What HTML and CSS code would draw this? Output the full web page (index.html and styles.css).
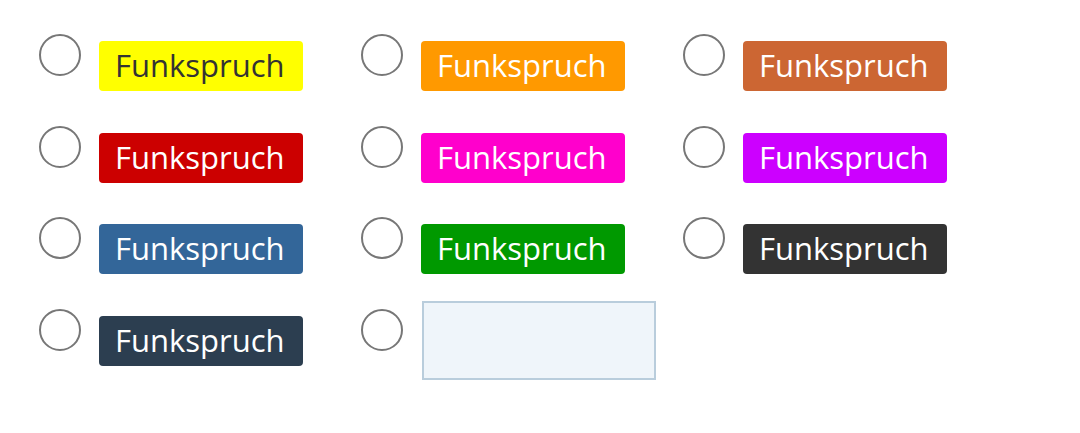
FILE: index.html
```html
<!DOCTYPE html>
<html lang="de">
<head>
	<meta charset="UTF-8">
	<title>Funkspruch</title>
	<link rel="stylesheet" href="styles.css">
</head>
<body>

	<div class="choices">
		<label class="choice"><span class="radio"></span><span class="tag yellow">Funkspruch</span></label>
		<label class="choice"><span class="radio"></span><span class="tag orange">Funkspruch</span></label>
		<label class="choice"><span class="radio"></span><span class="tag brown">Funkspruch</span></label>

		<label class="choice"><span class="radio"></span><span class="tag red">Funkspruch</span></label>
		<label class="choice"><span class="radio"></span><span class="tag pink">Funkspruch</span></label>
		<label class="choice"><span class="radio"></span><span class="tag purple">Funkspruch</span></label>

		<label class="choice"><span class="radio"></span><span class="tag blue">Funkspruch</span></label>
		<label class="choice"><span class="radio"></span><span class="tag green">Funkspruch</span></label>
		<label class="choice"><span class="radio"></span><span class="tag dark">Funkspruch</span></label>

		<label class="choice"><span class="radio"></span><span class="tag navy">Funkspruch</span></label>
		<label class="choice"><span class="radio"></span><input class="custom" type="text"></label>
	</div>

</body>
</html>
```

FILE: styles.css
```css
body{
	background-color: #fff;
	font-family: "Open Sans", sans-serif;
	margin: 0;
	padding: 0;
}

.choices{
	display: grid;
	grid-template-columns: repeat(3, 322px);
	grid-auto-rows: 91.7px;
	padding: 34px 0 0 39px;
}

.choice{
	display: flex;
	align-items: flex-start;
	gap: 18px;
}

.radio{
	display: inline-block;
	width: 38px;
	height: 38px;
	border: 2px solid #777;
	border-radius: 50%;
	box-sizing: content-box;
	flex: none;
}

.tag{
	display: inline-block;
	margin-top: 7px;
	height: 48px;
	line-height: 48px;
	padding: 0 18px 2px 16px;
	font-size: 31px;
	color: #fff;
	border-radius: 4px;
}

.yellow{ background-color: #ffff00; color: #333; }
.orange{ background-color: #ff9900; }
.brown{ background-color: #cc6633; }
.red{ background-color: #cc0000; }
.pink{ background-color: #ff00cc; }
.purple{ background-color: #cc00ff; }
.blue{ background-color: #336699; }
.green{ background-color: #009900; }
.dark{ background-color: #333333; }
.navy{ background-color: #2c3e50; }

.custom{
	margin: -8px 0 0 1px;
	width: 234px;
	height: 79px;
	box-sizing: border-box;
	background-color: #eff5fa;
	border: 2px solid #b9cddc;
	outline: none;
	padding: 0 10px;
	font-size: 30px;
}
```
